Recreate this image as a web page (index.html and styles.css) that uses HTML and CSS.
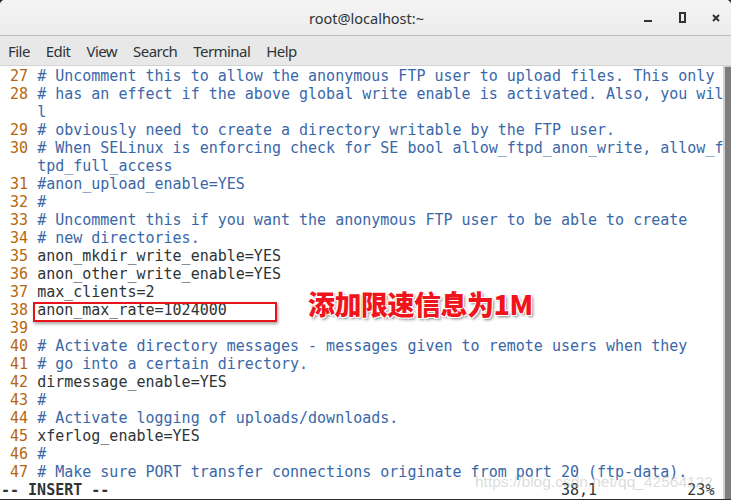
FILE: index.html
```html
<!DOCTYPE html>
<html lang="en">

<head>
    <meta charset="UTF-8">
    <title>root@localhost:~</title>
    <link rel="stylesheet" href="styles.css">
</head>

<body>

    <div class="window">

        <header class="titlebar">
            <span class="title">root@localhost:~</span>
            <div class="controls">
                <span class="ctl min"></span>
                <span class="ctl max"></span>
                <span class="ctl close">
                    <svg width="8" height="8" viewBox="0 0 8 8"><path d="M1 1L7 7M7 1L1 7" stroke="#2e3436" stroke-width="2"/></svg>
                </span>
            </div>
        </header>

        <nav class="menubar">
            <span>File</span>
            <span>Edit</span>
            <span>View</span>
            <span>Search</span>
            <span>Terminal</span>
            <span>Help</span>
        </nav>

        <main class="term">
            <div class="screen">
                <div class="row"><span class="nr"> 27 </span><span class="cm"># Uncomment this to allow the anonymous FTP user to upload files. This only</span></div>
                <div class="row"><span class="nr"> 28 </span><span class="cm"># has an effect if the above global write enable is activated. Also, you wil</span></div>
                <div class="row"><span class="nr">    </span><span class="cm">l</span></div>
                <div class="row"><span class="nr"> 29 </span><span class="cm"># obviously need to create a directory writable by the FTP user.</span></div>
                <div class="row"><span class="nr"> 30 </span><span class="cm"># When SELinux is enforcing check for SE bool allow_ftpd_anon_write, allow_f</span></div>
                <div class="row"><span class="nr">    </span><span class="cm">tpd_full_access</span></div>
                <div class="row"><span class="nr"> 31 </span><span class="cm">#anon_upload_enable=YES</span></div>
                <div class="row"><span class="nr"> 32 </span><span class="cm">#</span></div>
                <div class="row"><span class="nr"> 33 </span><span class="cm"># Uncomment this if you want the anonymous FTP user to be able to create</span></div>
                <div class="row"><span class="nr"> 34 </span><span class="cm"># new directories.</span></div>
                <div class="row"><span class="nr"> 35 </span>anon_mkdir_write_enable=YES</div>
                <div class="row"><span class="nr"> 36 </span>anon_other_write_enable=YES</div>
                <div class="row"><span class="nr"> 37 </span>max_clients=2</div>
                <div class="row"><span class="nr"> 38 </span>anon_max_rate=1024000</div>
                <div class="row"><span class="nr"> 39 </span></div>
                <div class="row"><span class="nr"> 40 </span><span class="cm"># Activate directory messages - messages given to remote users when they</span></div>
                <div class="row"><span class="nr"> 41 </span><span class="cm"># go into a certain directory.</span></div>
                <div class="row"><span class="nr"> 42 </span>dirmessage_enable=YES</div>
                <div class="row"><span class="nr"> 43 </span><span class="cm">#</span></div>
                <div class="row"><span class="nr"> 44 </span><span class="cm"># Activate logging of uploads/downloads.</span></div>
                <div class="row"><span class="nr"> 45 </span>xferlog_enable=YES</div>
                <div class="row"><span class="nr"> 46 </span><span class="cm">#</span></div>
                <div class="row"><span class="nr"> 47 </span><span class="cm"># Make sure PORT transfer connections originate from port 20 (ftp-data).</span></div>
                <div class="row"><b>-- INSERT --</b>                                                  38,1          23%</div>

                <div class="mark"></div>
                <div class="note">添加限速信息为1M</div>
                <div class="watermark">https://blog.csdn.net/qq_42564122</div>
            </div>
            <div class="scrollbar"><div class="thumb"></div></div>
        </main>

        <footer class="edge"></footer>

    </div>

</body>

</html>
```

FILE: styles.css
```css
* {
    margin: 0;
    box-sizing: border-box;
}

body {
    background-color: #1e2b33;
    width: 731px;
    height: 500px;
    overflow: hidden;
}

.window {
    display: flex;
    flex-direction: column;
    height: 500px;
    border-radius: 5px 5px 0 0;
    overflow: hidden;
    background-color: #fff;
}

.titlebar {
    position: relative;
    height: 36px;
    flex: none;
    display: flex;
    align-items: center;
    justify-content: center;
    background: linear-gradient(#f4f4f4, #ececec);
    border-bottom: 1px solid #bcbcbc;
    font-family: "Noto Sans", sans-serif;
    font-size: 14.5px;
    color: #2e3436;
}

.title {
    padding-left: 2px;
}

.controls {
    position: absolute;
    right: 0;
    top: 0;
    height: 35px;
    display: flex;
    align-items: center;
}

.ctl {
    height: 20px;
    display: flex;
    align-items: center;
    justify-content: center;
}

.min {
    width: 8px;
    margin-right: 27px;
}

.min::before {
    content: "";
    width: 8px;
    height: 2px;
    margin-top: 6px;
    background-color: #2e3436;
}

.max {
    width: 7px;
    margin-right: 26px;
}

.max::before {
    content: "";
    width: 7px;
    height: 7px;
    border: 2px solid #2e3436;
    margin-top: -1px;
}

.close {
    width: 8px;
    margin-right: 11px;
}

.menubar {
    height: 30px;
    flex: none;
    display: flex;
    align-items: center;
    gap: 16px;
    padding: 0 0 0 8px;
    background-color: #e8e8e8;
    border-bottom: 1px solid #d3d3d3;
    font-family: "Noto Sans", sans-serif;
    font-size: 15px;
    letter-spacing: -0.55px;
    color: #2e3436;
}

.term {
    flex: 1;
    display: flex;
    min-height: 0;
}

.screen {
    position: relative;
    flex: 1;
    padding: 1px 0 0 1px;
    font-family: "DejaVu Sans Mono", monospace;
    font-size: 15px;
    line-height: 18px;
    color: #2e3436;
}

.row {
    height: 18px;
    white-space: pre;
}

.nr {
    color: #b5660e;
}

.cm {
    color: #3a67a8;
}

.row b {
    color: #2e3436;
}

.mark {
    position: absolute;
    left: 33px;
    top: 236px;
    width: 244px;
    height: 20px;
    border: 2px solid #e8141b;
    box-shadow: 1px 2px 3px rgba(0, 0, 0, 0.35);
}

.note {
    position: absolute;
    left: 308px;
    top: 222px;
    font-family: "Noto Sans CJK SC", sans-serif;
    font-size: 27px;
    line-height: 32px;
    font-weight: 900;
    color: #f0141c;
    letter-spacing: -0.5px;
    text-shadow: -1px -1px 0 #fff, 1px -1px 0 #fff, -1px 1px 0 #fff, 1px 1px 0 #fff, 2px 2px 3px rgba(0, 0, 0, 0.5);
}

.watermark {
    position: absolute;
    left: 475px;
    top: 407px;
    font-family: "Liberation Sans", sans-serif;
    font-size: 15.5px;
    color: rgba(190, 190, 190, 0.55);
    white-space: nowrap;
}

.scrollbar {
    width: 9px;
    background-color: #d0d0d0;
    padding: 1px 0 0 2px;
}

.thumb {
    height: 100%;
    background-color: #7d7d7d;
}

.edge {
    height: 1px;
    flex: none;
    background-color: #2a2a2a;
}
```
